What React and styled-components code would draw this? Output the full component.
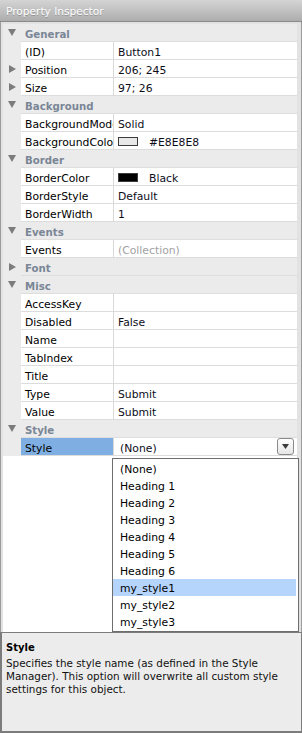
import React from "react";
import styled, { createGlobalStyle } from "styled-components";

const GlobalStyle = createGlobalStyle`
  body {
    margin: 0;
    background: #ffffff;
  }
`;

const FONT = `"DejaVu Sans", "Liberation Sans", sans-serif`;

const Window = styled.div`
  width: 302px;
  height: 733px;
  box-sizing: border-box;
  display: flex;
  flex-direction: column;
  background: #e2e2e2;
  border-left: 1px solid #9c9c9c;
  border-right: 1px solid #9c9c9c;
  font-family: ${FONT};
  font-size: 10.8px;
  color: #000;
`;

const TitleBar = styled.div`
  flex: none;
  height: 21px;
  margin: 0 -1px;
  padding-left: 6px;
  display: flex;
  align-items: center;
  background: linear-gradient(#d4d4d4, #adadad);
  border-bottom: 1px solid #8a8a8a;
  color: #fff;
  font-size: 10.6px;
  text-shadow: 0 1px 0 rgba(0, 0, 0, 0.22);
`;

const Sheet = styled.div`
  flex: 1;
  display: flex;
  flex-direction: column;
  margin: 2px 4px 0 2px;
  background: #fff;
`;

const GroupRow = styled.div`
  display: flex;
  align-items: center;
  height: 18px;
  box-sizing: border-box;
  background: #ebebeb;
  border-bottom: 1px solid #dedede;
  font-weight: bold;
  color: #7a8696;
  font-size: 10.2px;
`;

const GroupLabel = styled.span`
  padding: 3px 0 0 4px;
`;

const Toggle = styled.div`
  flex: none;
  width: 18px;
  height: 18px;
  display: flex;
  align-items: center;
  justify-content: center;
  background: #ebebeb;
`;

const PropRow = styled.div`
  position: relative;
  display: flex;
  height: 18px;
`;

const NameCell = styled.div`
  flex: none;
  width: 93px;
  box-sizing: border-box;
  padding: 3px 0 0 4px;
  display: flex;
  align-items: center;
  overflow: hidden;
  white-space: nowrap;
  border-right: 1px solid #d9d9d9;
  border-bottom: 1px solid #dcdcdc;
  background: ${(p) => (p.$selected ? "#7eaee2" : "#fff")};
`;

const ValueCell = styled.div`
  flex: 1;
  box-sizing: border-box;
  padding: 0 3px 0 4px;
  display: flex;
  align-items: center;
  white-space: nowrap;
  border-bottom: 1px solid #dcdcdc;
  color: ${(p) => (p.$muted ? "#a2a2a2" : "#0d0d1a")};
`;

const ValueText = styled.span`
  padding-top: 3px;
`;

const Swatch = styled.span`
  display: inline-block;
  width: 20px;
  height: 9px;
  box-sizing: border-box;
  border: 1px solid #3c3c3c;
  background: ${(p) => p.$color};
  margin: 1px 11px 0 0;
`;

const SelectText = styled.span`
  flex: 1;
  padding: 3px 0 0 2px;
`;

const DropButton = styled.div`
  width: 17px;
  height: 17px;
  box-sizing: border-box;
  border: 1px solid #8a8a8a;
  border-radius: 3px;
  background: linear-gradient(#ffffff, #e6e6e6);
  display: flex;
  align-items: center;
  justify-content: center;
`;

const Filler = styled.div`
  flex: 1;
  background: #fff;
`;

const DropList = styled.div`
  position: absolute;
  top: 20px;
  left: 109px;
  width: 187px;
  box-sizing: border-box;
  padding: 1px 2px 1px 0;
  background: #fff;
  border: 1px solid #6e6e6e;
  z-index: 2;
`;

const DropItem = styled.div`
  height: 17px;
  padding: 1px 0 0 7px;
  box-sizing: border-box;
  display: flex;
  align-items: center;
  background: ${(p) => (p.$active ? "#b6d5fd" : "transparent")};
`;

const HelpPanel = styled.div`
  flex: none;
  height: 101px;
  box-sizing: border-box;
  margin: 0 -1px;
  padding: 8px 4px 0 4px;
  background: #ececec;
  border: 1px solid #7c7c7c;
  border-width: 1px 1px 2px 2px;
  font-size: 10.4px;
  line-height: 13px;
  white-space: nowrap;
`;

const HelpTitle = styled.div`
  font-weight: bold;
  font-size: 10px;
  margin-bottom: 3px;
`;

const HelpText = styled.div`
  color: #111;
`;

function Arrow({ open }) {
  return open ? (
    <svg width="8" height="7" viewBox="0 0 8 7">
      <polygon points="0,0 8,0 4,7" fill="#7c7c7c" />
    </svg>
  ) : (
    <svg width="7" height="8" viewBox="0 0 7 8">
      <polygon points="0,0 7,4 0,8" fill="#7c7c7c" />
    </svg>
  );
}

const rows = [
  { group: "General", open: true },
  { name: "(ID)", value: "Button1" },
  { name: "Position", value: "206; 245", toggle: "closed" },
  { name: "Size", value: "97; 26", toggle: "closed" },
  { group: "Background", open: true },
  { name: "BackgroundMode", value: "Solid" },
  { name: "BackgroundColor", value: "#E8E8E8", swatch: "#e8e8e8" },
  { group: "Border", open: true },
  { name: "BorderColor", value: "Black", swatch: "#000" },
  { name: "BorderStyle", value: "Default" },
  { name: "BorderWidth", value: "1" },
  { group: "Events", open: true },
  { name: "Events", value: "(Collection)", muted: true },
  { group: "Font", open: false },
  { group: "Misc", open: true },
  { name: "AccessKey", value: "" },
  { name: "Disabled", value: "False" },
  { name: "Name", value: "" },
  { name: "TabIndex", value: "" },
  { name: "Title", value: "" },
  { name: "Type", value: "Submit" },
  { name: "Value", value: "Submit" },
  { group: "Style", open: true },
];

const styleOptions = [
  "(None)",
  "Heading 1",
  "Heading 2",
  "Heading 3",
  "Heading 4",
  "Heading 5",
  "Heading 6",
  "my_style1",
  "my_style2",
  "my_style3",
];

function App() {
  return (
    <>
      <GlobalStyle />
      <Window>
        <TitleBar>Property Inspector</TitleBar>
        <Sheet>
          {rows.map((r, i) =>
            r.group ? (
              <GroupRow key={i}>
                <Toggle>
                  <Arrow open={r.open} />
                </Toggle>
                <GroupLabel>{r.group}</GroupLabel>
              </GroupRow>
            ) : (
              <PropRow key={i}>
                <Toggle>{r.toggle && <Arrow open={false} />}</Toggle>
                <NameCell>{r.name}</NameCell>
                <ValueCell $muted={r.muted}>
                  {r.swatch && <Swatch $color={r.swatch} />}
                  <ValueText>{r.value}</ValueText>
                </ValueCell>
              </PropRow>
            )
          )}
          <PropRow>
            <Toggle />
            <NameCell $selected>Style</NameCell>
            <ValueCell>
              <SelectText>(None)</SelectText>
              <DropButton>
                <svg width="7" height="5" viewBox="0 0 7 5">
                  <polygon points="0,0 7,0 3.5,5" fill="#3a3a3a" />
                </svg>
              </DropButton>
            </ValueCell>
            <DropList>
              {styleOptions.map((o) => (
                <DropItem key={o} $active={o === "my_style1"}>
                  {o}
                </DropItem>
              ))}
            </DropList>
          </PropRow>
          <Filler />
        </Sheet>
        <HelpPanel>
          <HelpTitle>Style</HelpTitle>
          <HelpText>
            Specifies the style name (as defined in the Style
            <br />
            Manager). This option will overwrite all custom style
            <br />
            settings for this object.
          </HelpText>
        </HelpPanel>
      </Window>
    </>
  );
}

export default App;
